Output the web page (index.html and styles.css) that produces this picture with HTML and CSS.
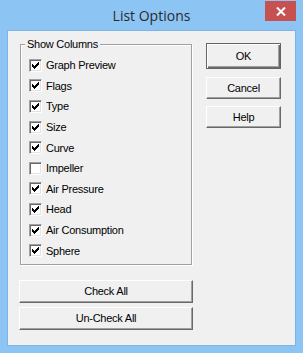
FILE: index.html
```html
<!DOCTYPE html>
<html lang="en">
<head>
    <meta charset="UTF-8">
    <meta name="viewport" content="width=device-width, initial-scale=1.0">
    <title>List Options</title>
    <link rel="stylesheet" href="styles.css">
</head>
<body>

    <svg width="0" height="0" class="defs">
        <symbol id="tick" viewBox="0 0 7 7">
            <path d="M6 0h1v3h-1v1h-1v1h-1v1h-1v1h-1v-1h-1v-1h-1v-3h1v1h1v1h1v-1h1v-1h1z" fill="#000"/>
        </symbol>
    </svg>

    <div class="window">
        <div class="titlebar">
            <span class="title">List Options</span>
            <span class="close">
                <svg width="10" height="9" viewBox="0 0 10 9">
                    <path d="M1 0.5l8 8M9 0.5l-8 8" stroke="#fff" stroke-width="2"/>
                </svg>
            </span>
        </div>

        <div class="client">
            <div class="left-col">
                <fieldset class="group">
                    <legend>Show Columns</legend>
                    <label class="row"><span class="box"><svg><use href="#tick"/></svg></span>Graph Preview</label>
                    <label class="row"><span class="box"><svg><use href="#tick"/></svg></span>Flags</label>
                    <label class="row"><span class="box"><svg><use href="#tick"/></svg></span>Type</label>
                    <label class="row"><span class="box"><svg><use href="#tick"/></svg></span>Size</label>
                    <label class="row"><span class="box"><svg><use href="#tick"/></svg></span>Curve</label>
                    <label class="row"><span class="box"></span>Impeller</label>
                    <label class="row"><span class="box"><svg><use href="#tick"/></svg></span>Air Pressure</label>
                    <label class="row"><span class="box"><svg><use href="#tick"/></svg></span>Head</label>
                    <label class="row"><span class="box"><svg><use href="#tick"/></svg></span>Air Consumption</label>
                    <label class="row"><span class="box"><svg><use href="#tick"/></svg></span>Sphere</label>
                </fieldset>
                <button class="btn wide first">Check All</button>
                <button class="btn wide">Un-Check All</button>
            </div>

            <div class="right-col">
                <button class="btn default">OK</button>
                <button class="btn side">Cancel</button>
                <button class="btn side">Help</button>
            </div>
        </div>
    </div>

</body>
</html>
```

FILE: styles.css
```css
body {
    margin: 0;
    font-family: "Liberation Sans", Arial, sans-serif;
    font-size: 11px;
    letter-spacing: -0.25px;
    color: #000;
}
.defs {
    position: absolute;
}
.window {
    width: 303px;
    height: 353px;
    box-sizing: border-box;
    background-color: #8cc4f4;
    padding: 0 8px 8px 8px;
}
.titlebar {
    position: relative;
    height: 31px;
    display: flex;
    align-items: center;
    justify-content: center;
}
.title {
    font-family: "Open Sans", "Noto Sans", sans-serif;
    font-size: 14px;
    letter-spacing: 0;
    color: #2b2b2b;
    margin-top: -1px;
}
.close {
    position: absolute;
    right: -1px;
    top: 1px;
    width: 31px;
    height: 20px;
    background-color: #c75050;
    display: flex;
    align-items: center;
    justify-content: center;
}
.client {
    height: 314px;
    background-color: #f0f0f0;
    box-shadow: 0 0 0 1px #7fb3e3;
    display: flex;
}
.left-col {
    width: 174px;
    margin-left: 11px;
    display: flex;
    flex-direction: column;
}
.group {
    margin: 7px 0 0 1px;
    width: 172px;
    box-sizing: border-box;
    padding: 4px 0 3px 8px;
    border: 1px solid #a0a0a0;
    box-shadow: inset 1px 1px 0 #fff, 1px 1px 0 #fff;
}
.group legend {
    padding: 0 2px;
    margin-left: -4px;
    line-height: 13px;
    background-color: #f0f0f0;
}
.row {
    display: flex;
    align-items: center;
    height: 20.6px;
}
.box {
    width: 13px;
    height: 13px;
    box-sizing: border-box;
    margin-right: 4px;
    background-color: #fff;
    border: 1px solid;
    border-color: #a0a0a0 #fff #fff #a0a0a0;
    box-shadow: inset 1px 1px 0 #696969, inset -1px -1px 0 #e3e3e3;
    display: flex;
    align-items: center;
    justify-content: center;
}
.box svg {
    width: 7px;
    height: 7px;
    shape-rendering: crispEdges;
}
.btn {
    font-family: inherit;
    font-size: 11px;
    letter-spacing: -0.25px;
    color: #000;
    background-color: #f0f0f0;
    padding: 0;
    border: 1px solid;
    border-color: #fff #696969 #696969 #fff;
    box-shadow: inset -1px -1px 0 #a0a0a0;
    box-sizing: border-box;
}
.wide {
    width: 174px;
    height: 23px;
    margin-top: 4px;
}
.wide.first {
    margin-top: 15px;
}
.right-col {
    width: 75px;
    margin-left: 13px;
    display: flex;
    flex-direction: column;
}
.default {
    height: 26px;
    margin-top: 12px;
    border: 1px solid #646464;
    box-shadow: inset 1px 1px 0 #fff, inset -1px -1px 0 #696969, inset -2px -2px 0 #a0a0a0;
}
.side {
    height: 22px;
    margin-top: 8px;
}
.side + .side {
    margin-top: 7px;
}
```
